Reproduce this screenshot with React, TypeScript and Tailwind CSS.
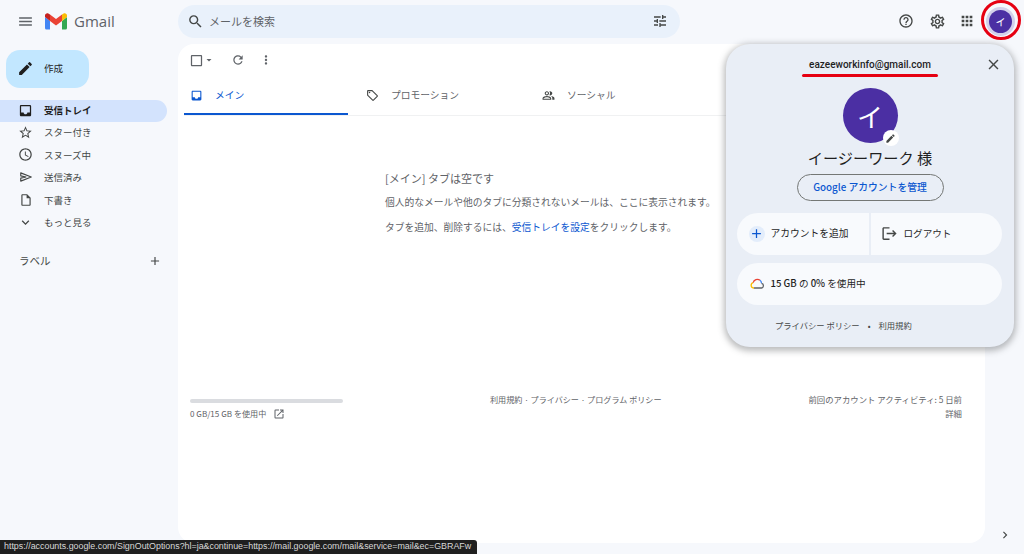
import type { ReactNode } from "react";
import {
  MdAdd,
  MdApps,
  MdArrowDropDown,
  MdCheckBoxOutlineBlank,
  MdChevronRight,
  MdClose,
  MdEdit,
  MdExpandMore,
  MdHelpOutline,
  MdInbox,
  MdLogout,
  MdMenu,
  MdMoreVert,
  MdOpenInNew,
  MdOutlineInsertDriveFile,
  MdOutlineLocalOffer,
  MdOutlinePeopleAlt,
  MdOutlineSchedule,
  MdOutlineSettings,
  MdOutlineStarBorder,
  MdRefresh,
  MdSearch,
  MdTune,
} from "react-icons/md";

function SentIcon() {
  return (
    <svg width="14" height="14" viewBox="0 0 24 24" fill="none" stroke="currentColor" strokeWidth="2" strokeLinejoin="round">
      <path d="M3 5l18 7-18 7v-5l9-2-9-2z" />
    </svg>
  );
}

const navItems = [
  { label: "スター付き", icon: <MdOutlineStarBorder size={15} /> },
  { label: "スヌーズ中", icon: <MdOutlineSchedule size={15} /> },
  { label: "送信済み", icon: <SentIcon /> },
  { label: "下書き", icon: <MdOutlineInsertDriveFile size={14} /> },
  { label: "もっと見る", icon: <MdExpandMore size={15} /> },
];

function GmailLogo() {
  return (
    <svg width="22" height="17" viewBox="0 0 22 17">
      <path d="M1.5 16.5h3.5V8L0 4v11a1.5 1.5 0 0 0 1.5 1.5z" fill="#4285f4" />
      <path d="M17 16.5h3.5A1.5 1.5 0 0 0 22 15V4l-5 4z" fill="#34a853" />
      <path d="M17 1.5V8l5-4V2.5C22 .6 19.8-.5 18.3.7z" fill="#fbbc04" />
      <path d="M5 8V1.5L11 6l6-4.500V8l-6 4.500z" fill="#ea4335" />
      <path d="M0 2.500V4l5 4V1.500L3.700.700C2.200-.5 0 .6 0 2.500z" fill="#c5221f" />
    </svg>
  );
}

function Tab({ icon, label, active }: { icon: ReactNode; label: string; active?: boolean }) {
  return (
    <div className="relative flex h-full w-[176px] items-center pl-[6px]">
      <span className={active ? "text-[#0b57d0]" : "text-[#444746]"}>{icon}</span>
      <span className={`ml-[12px] text-[9.750px] ${active ? "text-[#0b57d0]" : "text-[#5f6368]"}`}>{label}</span>
      {active && <div className="absolute bottom-0 left-0 h-[2px] w-[164px] bg-[#0b57d0]" />}
    </div>
  );
}

function AccountPopup() {
  return (
    <div className="absolute left-[726px] top-[44px] flex h-[303px] w-[288px] flex-col items-center rounded-[24px] bg-[#e9eef6] px-[11px] shadow-[0_2px_6px_2px_rgba(60,64,67,0.35)]">
      <div className="relative flex h-[40px] w-full items-center justify-center">
        <span className="text-[10px] font-medium text-[#1f1f1f]" style={{ fontFamily: "Roboto, sans-serif" }}>
          eazeeworkinfo@gmail.com
        </span>
        <MdClose size={17} className="absolute right-[1px] top-[12px] text-[#444746]" />
      </div>
      <div className="relative mt-[4px] flex h-[55px] w-[55px] items-center justify-center rounded-full bg-[#4b2fa3] text-[26px] text-white">
        イ
        <div className="absolute bottom-[-3px] right-[-1px] flex h-[16px] w-[16px] items-center justify-center rounded-full bg-white">
          <MdEdit size={11} className="text-[#444746]" />
        </div>
      </div>
      <div className="mt-[4px] text-[15.200px] leading-[20px] text-[#1f1f1f]">イージーワーク 様</div>
      <div className="mt-[7px] flex h-[27px] w-[147px] items-center justify-center rounded-full border border-[#747775] text-[9.800px] font-medium text-[#0b57d0]">
        Google アカウントを管理
      </div>
      <div className="ml-[-2px] mt-[12px] flex h-[42px] w-[265px] gap-[2px]">
        <div className="flex w-[132px] items-center rounded-l-full bg-[#f8fafd] pb-[1px] pl-[12px]">
          <span className="flex h-[16px] w-[16px] items-center justify-center rounded-full bg-[#e3edfb]">
            <MdAdd size={15} className="text-[#0b57d0]" />
          </span>
          <span className="ml-[6px] text-[9.750px] text-[#1f1f1f]">アカウントを追加</span>
        </div>
        <div className="flex flex-1 items-center rounded-r-full bg-[#f8fafd] pb-[1px] pl-[10px]">
          <MdLogout size={17} className="text-[#444746]" />
          <span className="ml-[6px] text-[9.600px] text-[#1f1f1f]">ログアウト</span>
        </div>
      </div>
      <div className="ml-[-2px] mt-[8px] flex h-[42px] w-[265px] items-center rounded-full bg-[#f8fafd] pb-[1px] pl-[13px]">
        <svg width="15" height="11" viewBox="0 0 15 11" fill="none" strokeWidth="1.3">
          <path d="M4 10H3.500A2.700 2.700 0 0 1 3.200 4.700" stroke="#fbbc04" />
          <path d="M3.200 4.700A4.200 4.200 0 0 1 10 2.300" stroke="#ea4335" />
          <path d="M10 2.300A4 4 0 0 1 11.500 5.300" stroke="#4285f4" />
          <path d="M11.500 5.300A2.400 2.400 0 0 1 11.500 10H4" stroke="#5f6368" />
        </svg>
        <span className="ml-[6px] text-[9.600px] text-[#1f1f1f]">
          <span className="font-medium">15 GB</span> の <span className="font-medium">0%</span> を使用中
        </span>
      </div>
      <div className="ml-[38px] mt-[14px] flex items-center gap-[8px] self-start text-[8.300px] text-[#444746]">
        <span>プライバシー ポリシー</span>
        <span>•</span>
        <span>利用規約</span>
      </div>
    </div>
  );
}

export default function App() {
  return (
    <div
      className="relative flex h-[554px] w-[1024px] flex-col overflow-hidden bg-[#f6f8fc]"
      style={{ fontFamily: '"Noto Sans CJK JP", "Noto Sans", sans-serif' }}
    >
      {/* Header */}
      <header className="flex h-[44px] shrink-0 items-center pb-[2px]">
        <div className="flex w-[178px] items-center pl-[17px]">
          <MdMenu size={17} className="text-[#5f6368]" />
          <div className="ml-[11px] flex items-center">
            <GmailLogo />
          </div>
          <span className="ml-[7px] text-[15px] text-[#5f6368]" style={{ fontFamily: '"Open Sans", sans-serif' }}>
            Gmail
          </span>
        </div>
        <div className="flex h-[33px] w-[502px] items-center rounded-full bg-[#e9f1fb] px-[9px]">
          <MdSearch size={17} className="text-[#444746]" />
          <span className="ml-[5px] flex-1 text-[11px] text-[#5f6368]">メールを検索</span>
          <MdTune size={16} className="mr-[3px] text-[#444746]" />
        </div>
        <div className="ml-auto flex items-center pr-[12px]">
          <MdHelpOutline size={16} className="text-[#444746]" />
          <MdOutlineSettings size={17} className="ml-[14.500px] text-[#444746]" />
          <MdApps size={16} className="ml-[13.500px] text-[#444746]" />
          <div className="ml-[14px] flex h-[23px] w-[23px] items-center justify-center rounded-full bg-[#4b2fa3] text-[10px] text-white ring-[3px] ring-[#d3d0ea]">
            イ
          </div>
        </div>
      </header>

      <div className="flex min-h-0 flex-1">
        {/* Sidebar */}
        <aside className="w-[178px] shrink-0">
          <div className="ml-[6px] mt-[6px] flex h-[38px] w-[83px] items-center rounded-[14px] bg-[#c2e7ff] pb-[1px] pl-[11px]">
            <MdEdit size={17} className="text-[#1f1f1f]" />
            <span className="ml-[10px] text-[9.500px] text-[#1f1f1f]">作成</span>
          </div>
          <nav className="mt-[12px]">
            <div className="mb-[-1px] flex h-[22px] w-[167px] items-center rounded-r-full bg-[#d3e3fd] pb-[1px] pl-[18px]">
              <MdInbox size={15} className="text-[#1f1f1f]" />
              <span className="ml-[11px] text-[9.500px] font-bold text-[#1f1f1f]">受信トレイ</span>
            </div>
            {navItems.map((item) => (
              <div key={item.label} className="flex h-[22.500px] w-[167px] items-center pl-[18px]">
                <span className="flex w-[15px] justify-center text-[#444746]">{item.icon}</span>
                <span className="ml-[11px] text-[9.500px] text-[#444746]">{item.label}</span>
              </div>
            ))}
          </nav>
          <div className="mt-[19.500px] flex w-[167px] items-center justify-between pl-[19px] pr-[5px]">
            <span className="text-[10.500px] text-[#444746]">ラベル</span>
            <MdAdd size={14} className="text-[#444746]" />
          </div>
        </aside>

        {/* Main panel */}
        <main className="mb-[11px] flex w-[807px] shrink-0 flex-col rounded-2xl bg-white pl-[6px]">
          <div className="flex h-[32px] shrink-0 items-center pl-[5px] text-[#5f6368]">
            <MdCheckBoxOutlineBlank size={15} />
            <MdArrowDropDown size={12} className="ml-[-1px]" />
            <MdRefresh size={14} className="ml-[16px]" />
            <MdMoreVert size={14} className="ml-[14px]" />
          </div>
          <div className="flex h-[40px] shrink-0 border-b border-[#f0f1f2]">
            <Tab active label="メイン" icon={<MdInbox size={13} />} />
            <Tab label="プロモーション" icon={<MdOutlineLocalOffer size={13} />} />
            <Tab label="ソーシャル" icon={<MdOutlinePeopleAlt size={13} />} />
          </div>
          <div className="ml-[201px] mt-[54px] text-[#5f6368]">
            <div className="text-[11px] leading-[16px]">[メイン] タブは空です</div>
            <div className="mt-[8px] text-[9.750px] leading-[16px]">個人的なメールや他のタブに分類されないメールは、ここに表示されます。</div>
            <div className="mt-[9px] text-[9.750px] leading-[16px]">
              タブを追加、削除するには、<span className="text-[#0b57d0]">受信トレイを設定</span>をクリックします。
            </div>
          </div>
          <div className="mt-[164px] flex items-start pr-[23px] text-[8.100px] text-[#5f6368]">
            <div className="w-[306px] pl-[6px]">
              <div className="h-[4px] w-[153px] rounded-full bg-[#dadce0]" />
              <div className="mt-[5px] flex items-center gap-[7px] leading-[12px]">
                0 GB/15 GB を使用中
                <MdOpenInNew size={12} />
              </div>
            </div>
            <div className="mt-[-5px] leading-[12px]">利用規約 · プライバシー · プログラム ポリシー</div>
            <div className="ml-auto mt-[-7px] text-right text-[8.400px] leading-[14px]">
              <div>前回のアカウント アクティビティ: 5 日前</div>
              <div>詳細</div>
            </div>
          </div>
        </main>

        <div className="flex flex-1 items-end justify-center pb-[12px]">
          <MdChevronRight size={14} className="text-[#444746]" />
        </div>
      </div>

      <AccountPopup />

      {/* Red annotations */}
      <div className="absolute left-[981px] top-0 h-[40px] w-[40px] rounded-full border-[3.500px] border-[#e60012]" />
      <div className="absolute left-[802px] top-[74px] h-[3px] w-[136px] rounded-full bg-[#e60012]" />

      {/* Link status bar */}
      <div
        className="absolute bottom-0 left-0 flex h-[14px] w-[477px] items-center rounded-tr-[3px] bg-[#1f1f1f] pl-[4px] text-[8.900px] whitespace-nowrap text-[#d8d8d8]"
        style={{ fontFamily: '"Liberation Sans", sans-serif' }}
      >
        https://accounts.google.com/SignOutOptions?hl=ja&amp;continue=https://mail.google.com/mail&amp;service=mail&amp;ec=GBRAFw
      </div>
    </div>
  );
}
